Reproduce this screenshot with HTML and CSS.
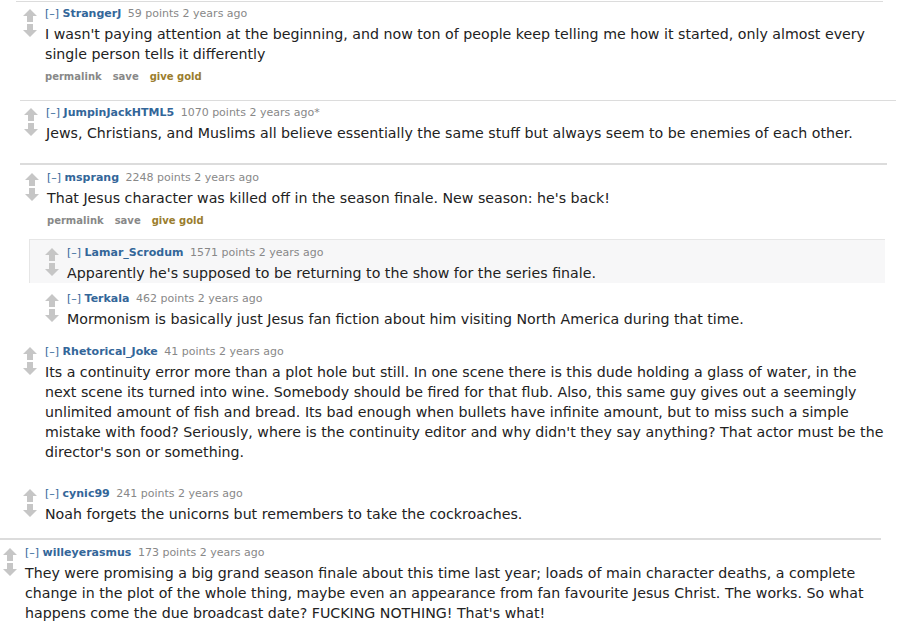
FILE: index.html
```html
<!DOCTYPE html>
<html>
<head>
<meta charset="utf-8">
<link rel="stylesheet" href="styles.css">
</head>
<body>
<svg width="0" height="0" class="defs">
  <defs>
    <symbol id="up" viewBox="0 0 14 13"><polygon points="7,0 14,7 10,7 10,13 4,13 4,7 0,7" fill="#c6c6c6"/></symbol>
    <symbol id="down" viewBox="0 0 14 13"><polygon points="7,13 14,6 10,6 10,0 4,0 4,6 0,6" fill="#c6c6c6"/></symbol>
  </defs>
</svg>

<section class="panel p1">
  <div class="comment c-strangerj">
    <div class="midcol"><svg class="arrow"><use href="#up"/></svg><svg class="arrow"><use href="#down"/></svg></div>
    <div class="entry">
      <p class="tagline"><span class="expand">[–]</span> <span class="author">StrangerJ</span> <span class="score">59 points</span> 2 years ago</p>
      <div class="md">I wasn't paying attention at the beginning, and now ton of people keep telling me how it started, only almost every single person tells it differently</div>
      <ul class="buttons"><li>permalink</li><li>save</li><li class="gold">give gold</li></ul>
    </div>
  </div>
</section>

<section class="panel p2">
  <div class="comment c-jumpin">
    <div class="midcol"><svg class="arrow"><use href="#up"/></svg><svg class="arrow"><use href="#down"/></svg></div>
    <div class="entry">
      <p class="tagline"><span class="expand">[–]</span> <span class="author">JumpinJackHTML5</span> <span class="score">1070 points</span> 2 years ago*</p>
      <div class="md">Jews, Christians, and Muslims all believe essentially the same stuff but always seem to be enemies of each other.</div>
    </div>
  </div>
</section>

<section class="panel p3">
  <div class="comment c-msprang">
    <div class="midcol"><svg class="arrow"><use href="#up"/></svg><svg class="arrow"><use href="#down"/></svg></div>
    <div class="entry">
      <p class="tagline"><span class="expand">[–]</span> <span class="author">msprang</span> <span class="score">2248 points</span> 2 years ago</p>
      <div class="md">That Jesus character was killed off in the season finale. New season: he's back!</div>
      <ul class="buttons"><li>permalink</li><li>save</li><li class="gold">give gold</li></ul>
    </div>
  </div>
  <div class="child">
    <div class="comment c-lamar">
      <div class="midcol"><svg class="arrow"><use href="#up"/></svg><svg class="arrow"><use href="#down"/></svg></div>
      <div class="entry">
        <p class="tagline"><span class="expand">[–]</span> <span class="author">Lamar_Scrodum</span> <span class="score">1571 points</span> 2 years ago</p>
        <div class="md">Apparently he's supposed to be returning to the show for the series finale.</div>
      </div>
    </div>
  </div>
  <div class="comment c-terkala">
    <div class="midcol"><svg class="arrow"><use href="#up"/></svg><svg class="arrow"><use href="#down"/></svg></div>
    <div class="entry">
      <p class="tagline"><span class="expand">[–]</span> <span class="author">Terkala</span> <span class="score">462 points</span> 2 years ago</p>
      <div class="md">Mormonism is basically just Jesus fan fiction about him visiting North America during that time.</div>
    </div>
  </div>
  <div class="comment c-rhet">
    <div class="midcol"><svg class="arrow"><use href="#up"/></svg><svg class="arrow"><use href="#down"/></svg></div>
    <div class="entry">
      <p class="tagline"><span class="expand">[–]</span> <span class="author">Rhetorical_Joke</span> <span class="score">41 points</span> 2 years ago</p>
      <div class="md">Its a continuity error more than a plot hole but still. In one scene there is this dude holding a glass of water, in the next scene its turned into wine. Somebody should be fired for that flub. Also, this same guy gives out a seemingly unlimited amount of fish and bread. Its bad enough when bullets have infinite amount, but to miss such a simple mistake with food? Seriously, where is the continuity editor and why didn't they say anything? That actor must be the director's son or something.</div>
    </div>
  </div>
  <div class="comment c-cynic">
    <div class="midcol"><svg class="arrow"><use href="#up"/></svg><svg class="arrow"><use href="#down"/></svg></div>
    <div class="entry">
      <p class="tagline"><span class="expand">[–]</span> <span class="author">cynic99</span> <span class="score">241 points</span> 2 years ago</p>
      <div class="md">Noah forgets the unicorns but remembers to take the cockroaches.</div>
    </div>
  </div>
</section>

<section class="panel p4">
  <div class="comment c-willey">
    <div class="midcol"><svg class="arrow"><use href="#up"/></svg><svg class="arrow"><use href="#down"/></svg></div>
    <div class="entry">
      <p class="tagline"><span class="expand">[–]</span> <span class="author">willeyerasmus</span> <span class="score">173 points</span> 2 years ago</p>
      <div class="md">They were promising a big grand season finale about this time last year; loads of main character deaths, a complete change in the plot of the whole thing, maybe even an appearance from fan favourite Jesus Christ. The works. So what happens come the due broadcast date? FUCKING NOTHING! That's what!</div>
    </div>
  </div>
</section>
</body>
</html>
```

FILE: styles.css
```css
html, body {
  margin: 0;
  padding: 0;
  background: #ffffff;
  font-family: "DejaVu Sans", Verdana, sans-serif;
  color: #222222;
}

.defs {
  position: absolute;
  width: 0;
  height: 0;
}

.panel {
  border-top: 1px solid #dcdcdc;
}

.p1 { margin: 1px 0 0 16px; width: 867px; }
.p2 { margin-left: 20px; width: 876px; }
.p3 { margin-left: 20px; width: 867px; border-top: 2px solid #dcdcdc; }
.p4 { margin-left: 0; width: 881px; border-top: 2px solid #dcdcdc; }

.comment {
  display: flex;
  align-items: flex-start;
  padding-right: 3px;
}

.midcol {
  flex: none;
  width: 14px;
  margin-right: 8px;
  padding-top: 2px;
  display: flex;
  flex-direction: column;
  gap: 2px;
}

.arrow {
  display: block;
  width: 14px;
  height: 13px;
}

.entry {
  flex: 1;
  min-width: 0;
}

.tagline {
  margin: 0;
  font-size: 11px;
  line-height: 14px;
  color: #888888;
  white-space: nowrap;
}

.expand { color: #369; }
.author { color: #369; font-weight: bold; margin-right: 3px; }

.md {
  margin-top: 3px;
  font-size: 14.2px;
  line-height: 20px;
  color: #222222;
}

.buttons {
  list-style: none;
  margin: 6px 0 0;
  padding: 0;
  display: flex;
  gap: 11px;
  font-size: 10px;
  line-height: 14px;
  font-weight: bold;
  color: #888888;
}

.buttons .gold { color: #9a7d2e; }

/* individual comment placement */
.c-strangerj { padding: 5px 0 16px 7px; }
.c-jumpin { padding: 5px 0 20px 4px; }
.c-msprang { padding: 6px 0 11px 5px; }

.child {
  margin-left: 9px;
  margin-right: 2px;
  background: #f7f7f8;
  border-top: 1px solid #e6e6e6;
  border-left: 1px solid #e6e6e6;
}

.c-lamar { padding: 6px 0 0 15px; }
.c-terkala { padding: 9px 0 0 25px; }
.c-rhet { padding: 16px 0 0 3px; }
.c-cynic { padding: 25px 0 14px 3px; }
.c-willey { padding: 6px 0 0 3px; }
```
